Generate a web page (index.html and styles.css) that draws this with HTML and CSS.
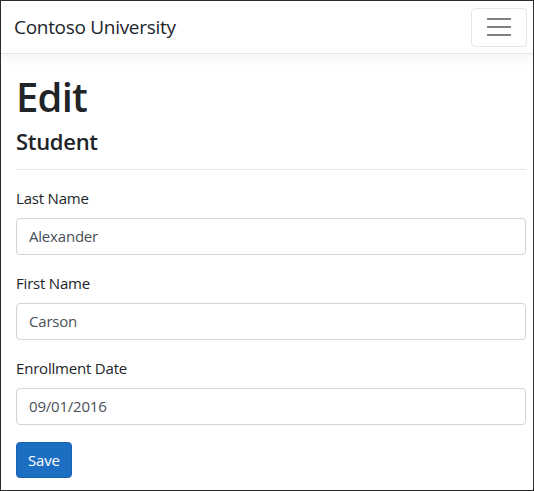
FILE: index.html
```html
<!DOCTYPE html>
<html lang="en">
<head>
<meta charset="utf-8">
<title>Edit - Contoso University</title>
<link rel="stylesheet" href="styles.css">
</head>
<body>
<div class="frame">
  <nav class="navbar">
    <span class="brand">Contoso University</span>
    <button class="toggler" type="button" aria-label="Toggle navigation">
      <svg width="30" height="30" viewBox="0 0 30 30"><path d="M3 7h24M3 15h24M3 23h24" stroke="rgba(0,0,0,0.5)" stroke-width="2" fill="none"/></svg>
    </button>
  </nav>
  <main class="content">
    <h1 class="title">Edit</h1>
    <h2 class="subtitle">Student</h2>
    <hr class="rule">
    <form class="form">
      <div class="group">
        <label class="label">Last Name</label>
        <div class="input">Alexander</div>
      </div>
      <div class="group">
        <label class="label">First Name</label>
        <div class="input">Carson</div>
      </div>
      <div class="group">
        <label class="label">Enrollment Date</label>
        <div class="input">09/01/2016</div>
      </div>
      <button class="save" type="button">Save</button>
    </form>
  </main>
</div>
</body>
</html>
```
FILE: styles.css
```css
html, body {
  margin: 0;
  padding: 0;
  background: #fff;
}
body {
  font-family: "Open Sans", "Noto Sans", sans-serif;
  color: #212529;
}
.frame {
  width: 534px;
  height: 491px;
  box-sizing: border-box;
  border: 1px solid #2b2b2b;
  overflow: hidden;
  background: #fff;
}
.navbar {
  height: 53px;
  box-sizing: border-box;
  border-bottom: 1px solid #e3e6ea;
  box-shadow: 0 4px 12px rgba(0, 0, 0, 0.05);
  display: flex;
  align-items: center;
  justify-content: space-between;
  padding: 0 6px 0 13px;
  position: relative;
}
.brand {
  font-size: 19px;
  letter-spacing: -0.3px;
  color: #212529;
}
.toggler {
  width: 56px;
  height: 39px;
  border: 1px solid rgba(0, 0, 0, 0.1);
  border-radius: 4px;
  background: transparent;
  display: flex;
  align-items: center;
  justify-content: center;
  padding: 0;
  margin-top: 0;
}
.toggler svg { display: block; }
.content {
  padding: 19px 7px 0 15px;
}
.title {
  font-size: 40px;
  line-height: 48px;
  font-weight: 600;
  margin: 0;
  letter-spacing: -0.8px;
}
.subtitle {
  font-size: 22px;
  line-height: 26px;
  font-weight: 600;
  margin: 7px 0 0;
  letter-spacing: -0.3px;
}
.rule {
  border: 0;
  border-top: 1px solid #e6e6e6;
  margin: 15px 0 0;
}
.form {
  margin-top: 16px;
}
.group {
  margin-bottom: 16px;
}
.label {
  display: block;
  font-size: 15px;
  line-height: 24px;
  margin-bottom: 8px;
  letter-spacing: -0.2px;
}
.input {
  height: 37px;
  box-sizing: border-box;
  border: 1px solid #ced4da;
  border-radius: 4px;
  padding: 0 12px;
  font-size: 15px;
  line-height: 35px;
  color: #495057;
  letter-spacing: -0.2px;
}
.save {
  font-family: inherit;
  font-size: 15px;
  line-height: 24px;
  padding: 5px 11px;
  color: #fff;
  background: #1b6ec2;
  border: 1px solid #1861ac;
  border-radius: 4px;
  letter-spacing: -0.2px;
  margin-top: 1px;
}
```
